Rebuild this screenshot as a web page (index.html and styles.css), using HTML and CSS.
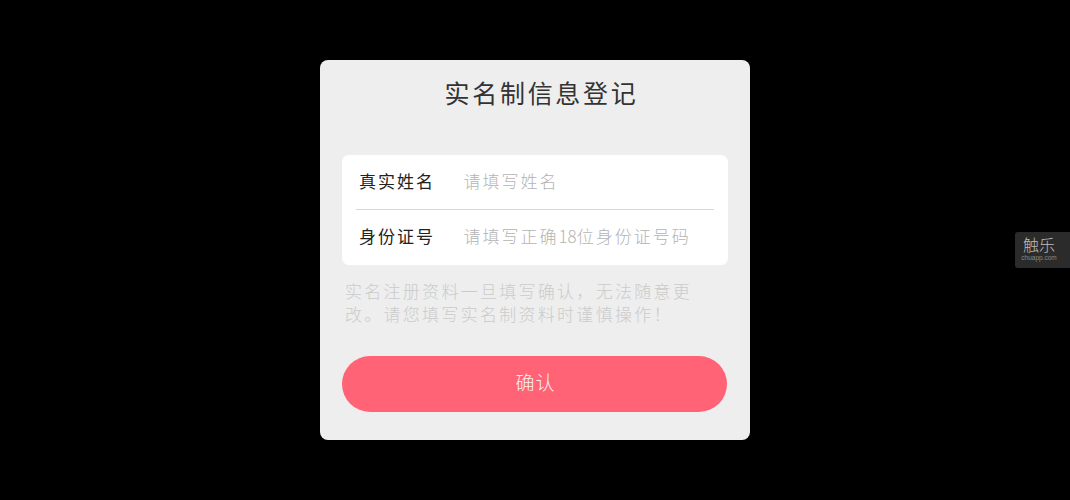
FILE: index.html
```html
<!DOCTYPE html>
<html lang="zh-CN">
<head>
<meta charset="utf-8">
<title>实名制信息登记</title>
<link rel="stylesheet" href="styles.css">
</head>
<body>
<main class="card">
  <h1 class="title">实名制信息登记</h1>
  <div class="fields">
    <div class="row">
      <span class="label">真实姓名</span>
      <span class="placeholder">请填写姓名</span>
    </div>
    <div class="divider"></div>
    <div class="row">
      <span class="label">身份证号</span>
      <span class="placeholder">请填写正确<span class="num">18</span>位身份证号码</span>
    </div>
  </div>
  <p class="hint">实名注册资料一旦填写确认，无法随意更<br>改。请您填写实名制资料时谨慎操作！</p>
  <button class="confirm" type="button">确认</button>
</main>
<aside class="mark">
  <span class="mark-name">触乐</span>
  <span class="mark-url">chuapp.com</span>
</aside>
</body>
</html>
```

FILE: styles.css
```css
* { box-sizing: border-box; }
html, body { margin: 0; height: 100%; }
body {
  background: #000;
  display: flex;
  align-items: center;
  justify-content: center;
  font-family: "Noto Sans CJK SC", "Noto Sans", sans-serif;
  overflow: hidden;
}
.card {
  width: 430px;
  height: 380px;
  background: #eeeeee;
  border-radius: 8px;
  padding: 0 22px;
  display: flex;
  flex-direction: column;
}
.title {
  margin: 13px 0 0;
  height: 38px;
  line-height: 38px;
  font-size: 25px;
  font-weight: 400;
  letter-spacing: 2.7px;
  text-align: center;
  color: #333;
  padding-left: 13px;
}
.fields {
  margin-top: 44px;
  height: 110px;
  background: #fff;
  border-radius: 7px;
  display: flex;
  flex-direction: column;
}
.row {
  flex: 1;
  display: flex;
  align-items: center;
  padding-left: 17px;
  padding-bottom: 3px;
  font-size: 17px;
  letter-spacing: 2px;
  line-height: 24px;
}
.label {
  width: 104.5px;
  color: #222;
  font-weight: 400;
}
.placeholder {
  color: #b4b4b4;
  font-weight: 300;
}
.num {
  letter-spacing: 0;
}
.divider {
  height: 1px;
  margin: -1px 14px 0;
  background: #d6d6d6;
}
.hint {
  margin: 14px 0 0;
  padding-left: 3px;
  font-size: 17px;
  font-weight: 300;
  line-height: 23px;
  letter-spacing: 2.28px;
  color: #cbcbcb;
  white-space: nowrap;
}
.confirm {
  margin-top: 31px;
  height: 56px;
  width: 385px;
  border: 0;
  border-radius: 28px;
  background: #ff6375;
  color: #fbeef0;
  font-family: inherit;
  font-size: 19px;
  font-weight: 300;
  letter-spacing: 1px;
  padding: 0 0 5px 2px;
}
.mark {
  position: absolute;
  left: 1015px;
  top: 232px;
  width: 55px;
  height: 36px;
  padding-right: 7px;
  background: #2b2b2b;
  border-radius: 3px 0 0 3px;
  display: flex;
  flex-direction: column;
  align-items: center;
  color: #bdbdbd;
}
.mark-name {
  font-size: 16px;
  line-height: 19px;
  margin-top: 3px;
  font-weight: 300;
}
.mark-url {
  font-family: "Liberation Sans", sans-serif;
  font-size: 6.5px;
  line-height: 8px;
  color: #8a8a8a;
}
```
